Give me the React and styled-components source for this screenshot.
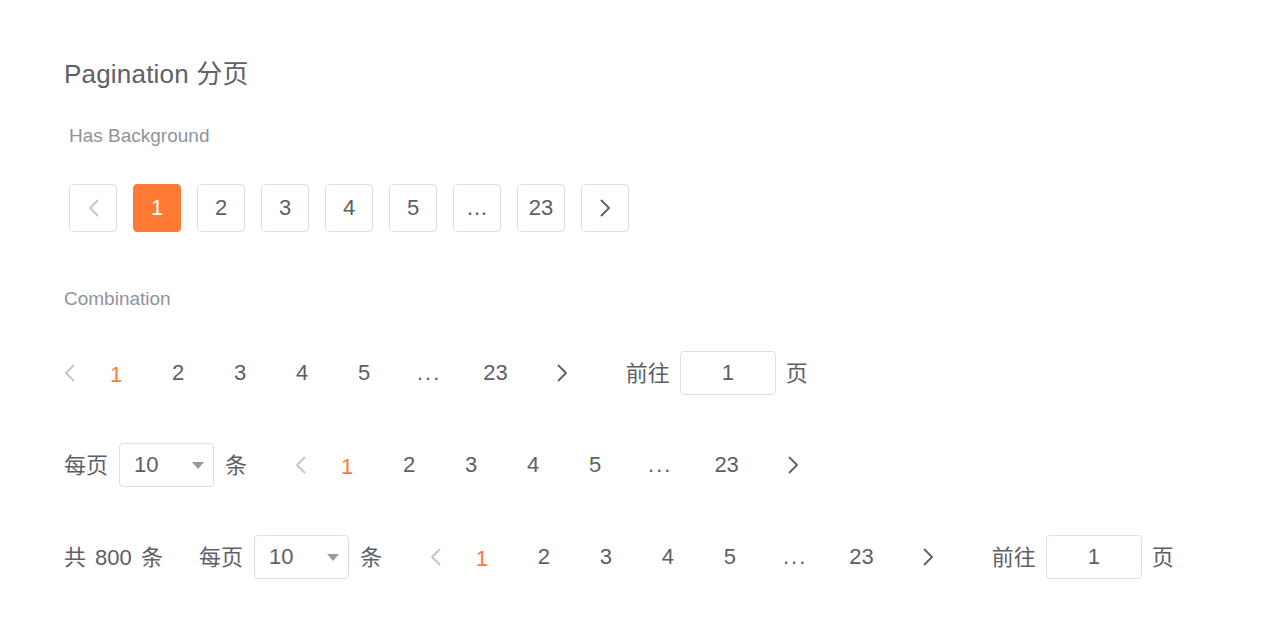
import React from 'react';
import styled, { createGlobalStyle, css } from 'styled-components';

const GlobalStyle = createGlobalStyle`
  html, body {
    margin: 0;
    padding: 0;
    background: #ffffff;
  }
  body {
    font-family: 'Liberation Sans', 'Noto Sans CJK SC', sans-serif;
    color: #606266;
  }
`;

const ORANGE = '#ff7a33';
const BORDER = '#dcdfe6';

const Page = styled.div`
  padding: 56px 64px;
`;

const Title = styled.h2`
  margin: 0;
  font-size: 26px;
  line-height: 36px;
  font-weight: 400;
  letter-spacing: 0.2px;
  color: #5e6166;
`;

const SectionLabel = styled.div`
  margin-top: ${(p) => p.$top}px;
  padding-left: ${(p) => (p.$indent ? 5 : 0)}px;
  font-size: 19px;
  line-height: 24px;
  color: #909399;
`;

const BgPager = styled.ul`
  display: flex;
  gap: 16px;
  list-style: none;
  margin: 36px 0 0;
  padding: 0 0 0 5px;
`;

const BgItem = styled.li`
  width: 48px;
  height: 48px;
  box-sizing: border-box;
  display: flex;
  align-items: center;
  justify-content: center;
  border-radius: 4px;
  font-size: 22px;
  border: 1px solid ${(p) => (p.$active ? ORANGE : BORDER)};
  background: ${(p) => (p.$active ? ORANGE : '#ffffff')};
  color: ${(p) => (p.$active ? '#ffffff' : p.$muted ? '#c0c4cc' : '#5c5f66')};
`;

const Rows = styled.div`
  margin-top: 40px;
  display: flex;
  flex-direction: column;
  gap: 48px;
`;

const Row = styled.div`
  display: flex;
  align-items: center;
  height: 44px;
`;

const Text = styled.span`
  font-size: 22px;
  color: #5c5f66;
  white-space: nowrap;
  padding-bottom: 4px;
  word-spacing: ${(p) => (p.$wide ? 3 : 0)}px;
  margin-right: ${(p) => p.$gap || 0}px;
`;

const Pager = styled.ul`
  display: flex;
  align-items: center;
  list-style: none;
  margin: 0 0 0 ${(p) => p.$offset || 0}px;
  padding: 0;
  height: 44px;
`;

const Item = styled.li`
  min-width: 62px;
  padding: 0 22px;
  box-sizing: border-box;
  text-align: center;
  font-size: 22px;
  line-height: 44px;
  color: ${(p) => (p.$active ? ORANGE : '#5c5f66')};
  ${(p) =>
    p.$active &&
    css`
      padding-top: 4px;
    `}
  ${(p) =>
    p.$more &&
    css`
      letter-spacing: 2px;
      padding: 0 20px 0 22px;
    `}
`;

const ArrowBtn = styled.li`
  display: flex;
  align-items: center;
  height: 44px;
  padding: ${(p) => (p.$next ? '0 0 0 27px' : '0 10px 0 0')};
  color: ${(p) => (p.$disabled ? '#c0c4cc' : '#5c5f66')};
`;

const Chevron = ({ dir }) => (
  <svg width="11" height="18" viewBox="0 0 11 18" fill="none">
    <polyline
      points={dir === 'left' ? '9.5,1.5 2,9 9.5,16.5' : '1.5,1.5 9,9 1.5,16.5'}
      stroke="currentColor"
      strokeWidth="1.8"
      strokeLinecap="round"
      strokeLinejoin="round"
    />
  </svg>
);

const Box = styled.div`
  height: 44px;
  box-sizing: border-box;
  border: 1px solid ${BORDER};
  border-radius: 4px;
  background: #fff;
  display: flex;
  align-items: center;
  font-size: 22px;
  color: #5c5f66;
  margin: 0 11px;
`;

const SelectBox = styled(Box)`
  width: 95px;
  padding: 0 9px 0 14px;
  justify-content: space-between;
`;

const Caret = styled.span`
  width: 0;
  height: 0;
  border-left: 6px solid transparent;
  border-right: 6px solid transparent;
  border-top: 7px solid #999999;
`;

const JumpBox = styled(Box)`
  width: 96px;
  justify-content: center;
  margin: 0 10px;
`;

const Jumper = styled.div`
  display: flex;
  align-items: center;
  margin-left: 58px;
`;

const pages = ['1', '2', '3', '4', '5', '...', '23'];

const PlainPager = ({ offset }) => (
  <Pager $offset={offset}>
    <ArrowBtn $disabled>
      <Chevron dir="left" />
    </ArrowBtn>
    {pages.map((p) => (
      <Item key={p} $active={p === '1'} $more={p === '...'}>
        {p}
      </Item>
    ))}
    <ArrowBtn $next>
      <Chevron dir="right" />
    </ArrowBtn>
  </Pager>
);

const Sizes = () => (
  <>
    <Text>每页</Text>
    <SelectBox>
      <span>10</span>
      <Caret />
    </SelectBox>
    <Text>条</Text>
  </>
);

const Jump = () => (
  <Jumper>
    <Text>前往</Text>
    <JumpBox>1</JumpBox>
    <Text>页</Text>
  </Jumper>
);

const App = () => (
  <>
    <GlobalStyle />
    <Page>
      <Title>Pagination 分页</Title>

      <SectionLabel $top={32} $indent>
        Has Background
      </SectionLabel>
      <BgPager>
        <BgItem $muted>
          <Chevron dir="left" />
        </BgItem>
        {pages.map((p) => (
          <BgItem key={p} $active={p === '1'}>
            {p === '...' ? '…' : p}
          </BgItem>
        ))}
        <BgItem>
          <Chevron dir="right" />
        </BgItem>
      </BgPager>

      <SectionLabel $top={55}>Combination</SectionLabel>
      <Rows>
        <Row>
          <PlainPager />
          <Jump />
        </Row>
        <Row>
          <Sizes />
          <PlainPager offset={48} />
        </Row>
        <Row>
          <Text $gap={36} $wide>
            共 800 条
          </Text>
          <Sizes />
          <PlainPager offset={48} />
          <Jump />
        </Row>
      </Rows>
    </Page>
  </>
);

export default App;
